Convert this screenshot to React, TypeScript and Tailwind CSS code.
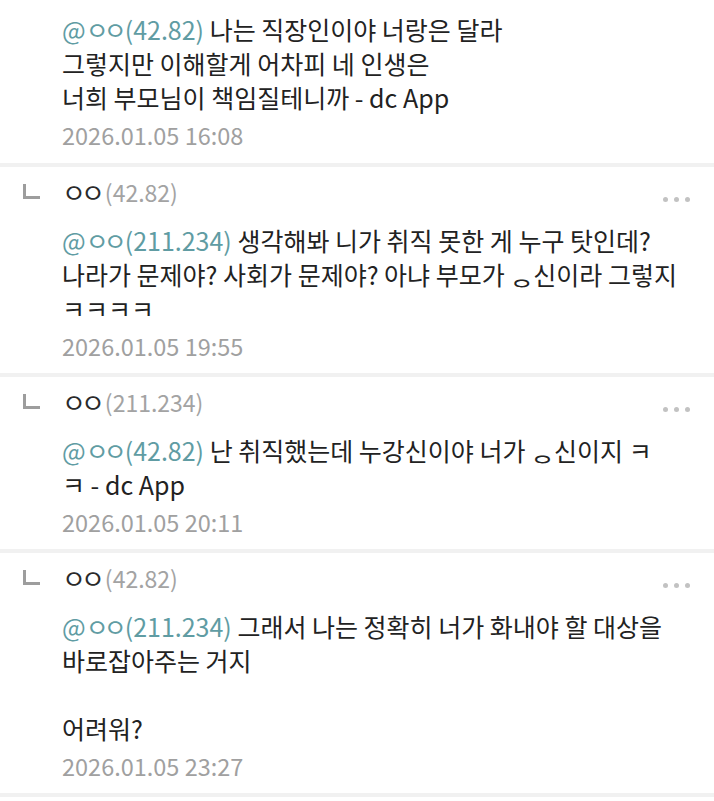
import React from "react";

type Comment = {
  name?: string;
  ip?: string;
  mention: string;
  lines: string[];
  date: string;
};

const comments: Comment[] = [
  {
    mention: "42.82",
    lines: ["나는 직장인이야 너랑은 달라", "그렇지만 이해할게 어차피 네 인생은", "너희 부모님이 책임질테니까 - dc App"],
    date: "2026.01.05 16:08",
  },
  {
    name: "ㅇㅇ",
    ip: "42.82",
    mention: "211.234",
    lines: ["생각해봐 니가 취직 못한 게 누구 탓인데?", "나라가 문제야? 사회가 문제야? 아냐 부모가 ᆼ신이라 그렇지", "ㅋㅋㅋㅋ"],
    date: "2026.01.05 19:55",
  },
  {
    name: "ㅇㅇ",
    ip: "211.234",
    mention: "42.82",
    lines: ["난 취직했는데 누강신이야 너가 ᆼ신이지 ㅋ", "ㅋ - dc App"],
    date: "2026.01.05 20:11",
  },
  {
    name: "ㅇㅇ",
    ip: "42.82",
    mention: "211.234",
    lines: ["그래서 나는 정확히 너가 화내야 할 대상을", "바로잡아주는 거지", "", "어려워?"],
    date: "2026.01.05 23:27",
  },
];

const Dots = () => (
  <div className="flex items-center gap-x-[6px] mt-[14px]">
    <span className="w-[5px] h-[5px] rounded-full bg-[#c2c2c2]" />
    <span className="w-[5px] h-[5px] rounded-full bg-[#c2c2c2]" />
    <span className="w-[5px] h-[5px] rounded-full bg-[#c2c2c2]" />
  </div>
);

const cx = (...xs: string[]) => xs.filter(Boolean).join(" ");

const CommentItem = ({ c, first }: { c: Comment; first?: boolean }) => {
  return (
    <div className={first ? "pt-[12px] pb-[11px]" : "pt-[8px] pb-[10px]"}>
      {c.name && (
        <div className="flex flex-row items-center justify-between pr-[24px]">
          <div className="flex flex-row items-center">
            <span className="ml-[23px] mb-[2px] w-[17px] h-[15px] border-l-[3px] border-b-[3px] border-[#9d9d9d]" />
            <span className="ml-[22px] text-[26px] leading-[34px] text-[#2a2a2a] tracking-[-5px]">
              {c.name}
            </span>
            <span className="ml-[5px] text-[23px] leading-[34px] text-[#a3a3a3]">({c.ip})</span>
          </div>
          <Dots />
        </div>
      )}
      <div className={cx(c.name ? "mt-[14px]" : "", "pl-[62px] text-[25px] leading-[34px] text-[#222]")}>
        {c.lines.map((line, i) => (
          <div key={i} className="whitespace-nowrap h-[34px]">
            {i === 0 && (
              <span className="text-[#609ca3]">
                @<span className="tracking-[-5px]">ㅇㅇ</span>
                <span className="ml-[3px]">({c.mention})</span>{" "}
              </span>
            )}
            {line}
          </div>
        ))}
        <div className="mt-[4px] text-[23.5px] text-[#a0a0a0]">{c.date}</div>
      </div>
    </div>
  );
};

export default function App() {
  return (
    <div
      className="w-[714px] h-[801px] bg-white overflow-hidden"
      style={{ fontFamily: '"Noto Sans CJK KR", "Noto Sans", sans-serif' }}
    >
      {comments.map((c, i) => (
        <div key={i}>
          <CommentItem c={c} first={i === 0} />
          <div className="h-[4px] bg-[#f1f1f1]" />
        </div>
      ))}
    </div>
  );
}
